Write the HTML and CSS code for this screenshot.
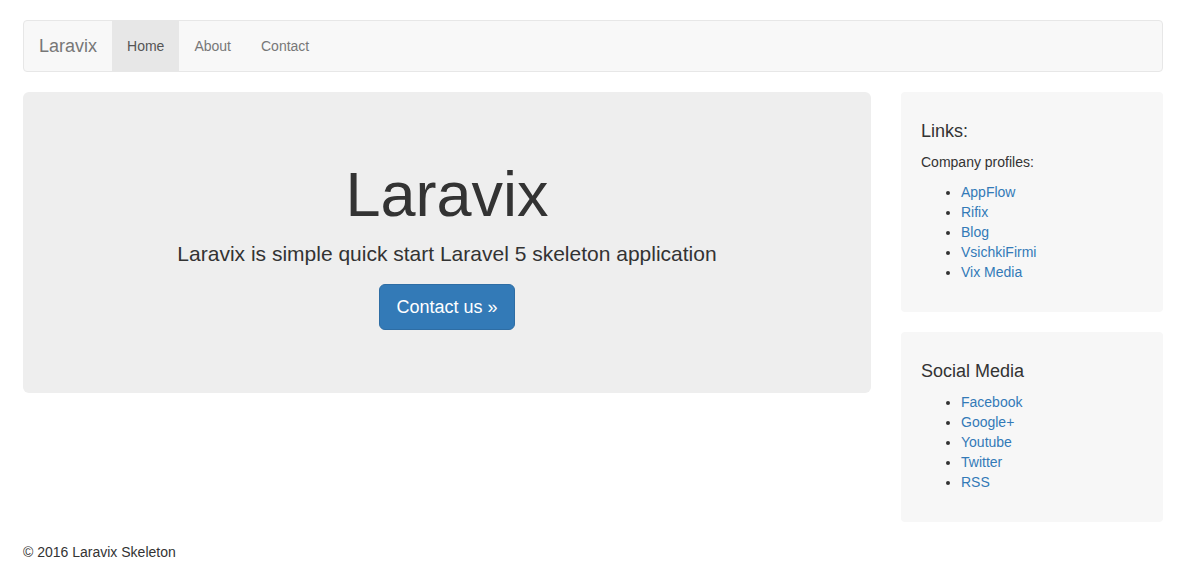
FILE: index.html
```html
<!DOCTYPE html>
<html lang="en">
<head>
<meta charset="utf-8">
<title>Laravix</title>
<link rel="stylesheet" href="styles.css">
</head>
<body>
<div class="page">
  <nav class="navbar">
    <a class="brand" href="#">Laravix</a>
    <ul class="nav">
      <li><a class="active" href="#">Home</a></li>
      <li><a href="#">About</a></li>
      <li><a href="#">Contact</a></li>
    </ul>
  </nav>
  <div class="row">
    <main class="main">
      <div class="jumbotron">
        <h1>Laravix</h1>
        <p>Laravix is simple quick start Laravel 5 skeleton application</p>
        <p><a class="btn" href="#">Contact us &raquo;</a></p>
      </div>
    </main>
    <aside class="sidebar">
      <div class="well">
        <h4>Links:</h4>
        <p>Company profiles:</p>
        <ul>
          <li><a href="#">AppFlow</a></li>
          <li><a href="#">Rifix</a></li>
          <li><a href="#">Blog</a></li>
          <li><a href="#">VsichkiFirmi</a></li>
          <li><a href="#">Vix Media</a></li>
        </ul>
      </div>
      <div class="well">
        <h4>Social Media</h4>
        <ul>
          <li><a href="#">Facebook</a></li>
          <li><a href="#">Google+</a></li>
          <li><a href="#">Youtube</a></li>
          <li><a href="#">Twitter</a></li>
          <li><a href="#">RSS</a></li>
        </ul>
      </div>
    </aside>
  </div>
  <footer class="footer">
    <p>&copy; 2016 Laravix Skeleton</p>
  </footer>
</div>
</body>
</html>
```

FILE: styles.css
```css
* { box-sizing: border-box; }
html, body { margin: 0; padding: 0; }
body {
  font-family: "Liberation Sans", Arial, sans-serif;
  font-size: 14px;
  line-height: 20px;
  color: #333;
  background: #fff;
}
a { color: #337ab7; text-decoration: none; }
p { margin: 0 0 10px; }

.page {
  margin: 0 26px 0 23px;
  padding-top: 20px;
}

.navbar {
  display: flex;
  align-items: stretch;
  min-height: 52px;
  background: #f8f8f8;
  border: 1px solid #e7e7e7;
  border-radius: 4px;
  margin-bottom: 20px;
}
.brand {
  display: block;
  padding: 15px;
  font-size: 18px;
  line-height: 20px;
  height: 50px;
  color: #777;
}
.nav {
  display: flex;
  list-style: none;
  margin: 0;
  padding: 0;
}
.nav a {
  display: block;
  padding: 15px;
  line-height: 20px;
  color: #777;
}
.nav a.active {
  background: #e7e7e7;
  color: #555;
}

.row {
  display: grid;
  grid-template-columns: 848px 1fr;
  column-gap: 30px;
}

.jumbotron {
  background: #eee;
  border-radius: 6px;
  padding: 48px 60px;
  text-align: center;
  margin-bottom: 30px;
}
.jumbotron h1 {
  font-size: 63px;
  font-weight: 500;
  line-height: 1.1;
  margin: 20px 0 10px;
  color: #333;
}
.jumbotron p {
  font-size: 21px;
  line-height: 30px;
  font-weight: 200;
  margin-bottom: 15px;
}
.jumbotron p:last-child { margin-bottom: 15px; line-height: 46px; }
.btn {
  display: inline-block;
  vertical-align: top;
  padding: 10px 16px;
  font-size: 18px;
  line-height: 24px;
  color: #fff;
  background: #337ab7;
  border: 1px solid #2e6da4;
  border-radius: 6px;
}

.well {
  background: #f7f7f7;
  border-radius: 4px;
  padding: 20px;
  margin-bottom: 20px;
}
.well h4 {
  font-size: 18px;
  font-weight: 500;
  line-height: 1.1;
  margin: 10px 0 10px;
}
.well ul {
  margin: 0 0 10px;
  padding-left: 40px;
}

.footer p { margin: 0 0 10px; }
```
